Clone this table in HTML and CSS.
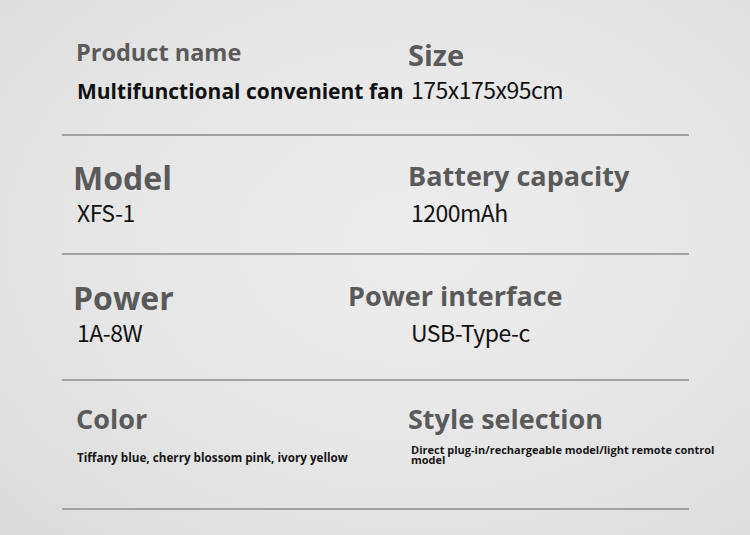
FILE: index.html
```html
<!DOCTYPE html>
<html lang="en">
<head>
<meta charset="utf-8">
<title>Product specs</title>
<link rel="stylesheet" href="styles.css">
</head>
<body>
<main class="sheet">
  <section class="row row-1">
    <div class="cell cell-left">
      <h2 class="label label-sm">Product name</h2>
      <p class="value value-bold">Multifunctional convenient fan</p>
    </div>
    <div class="cell cell-right">
      <h2 class="label label-size">Size</h2>
      <p class="value">175x175x95cm</p>
    </div>
  </section>
  <section class="row row-2">
    <div class="cell cell-left">
      <h2 class="label label-lg shift-l">Model</h2>
      <p class="value">XFS-1</p>
    </div>
    <div class="cell cell-right">
      <h2 class="label label-md">Battery capacity</h2>
      <p class="value">1200mAh</p>
    </div>
  </section>
  <section class="row row-3">
    <div class="cell cell-left">
      <h2 class="label label-lg shift-l">Power</h2>
      <p class="value">1A-8W</p>
    </div>
    <div class="cell cell-right">
      <h2 class="label label-md shift-far">Power interface</h2>
      <p class="value">USB-Type-c</p>
    </div>
  </section>
  <section class="row row-4">
    <div class="cell cell-left">
      <h2 class="label label-md">Color</h2>
      <p class="note">Tiffany blue, cherry blossom pink, ivory yellow</p>
    </div>
    <div class="cell cell-right">
      <h2 class="label label-md">Style selection</h2>
      <p class="note note-sm">Direct plug-in/rechargeable model/light remote control model</p>
    </div>
  </section>
</main>
</body>
</html>
```

FILE: styles.css
```css
html, body {
  margin: 0;
  padding: 0;
}
body {
  width: 750px;
  height: 535px;
  overflow: hidden;
  background: radial-gradient(ellipse at 55% 45%, #ededed 0%, #e6e6e6 55%, #dbdbdb 100%);
  font-family: "Open Sans", "Noto Sans", sans-serif;
}
.sheet {
  margin-left: 62px;
  width: 627px;
}
.row {
  display: grid;
  grid-template-columns: 346px 1fr;
  border-bottom: 2px solid #a2a2a2;
  box-sizing: border-box;
}
.row-1 { height: 136px; padding-top: 41px; }
.row-2 { height: 119px; padding-top: 26px; }
.row-3 { height: 126px; padding-top: 27px; }
.row-4 { height: 129px; padding-top: 24px; }
.cell {
  display: flex;
  flex-direction: column;
}
.cell-left { padding-left: 14px; }
.cell-right { padding-left: 0; }
.label {
  margin: 0;
  color: #5a5a5a;
  font-weight: 700;
  line-height: 1;
  white-space: nowrap;
}
.row-1 .label { height: 37px; }
.row-2 .label,
.row-3 .label { height: 38.5px; }
.row-4 .label { height: 46.5px; }
.label-sm { font-size: 23.5px; }
.label-size { font-size: 29px; margin-top: -1px; margin-bottom: 1px; }
.label-md { font-size: 27px; }
.label-lg { font-size: 32px; }
.shift-l { margin-left: -3px; }
.shift-far { margin-left: -60px; }
.value {
  margin: 0 0 0 1px;
  color: #111;
  font-family: "Noto Sans CJK SC", "Noto Sans", sans-serif;
  font-size: 23px;
  letter-spacing: -0.5px;
  line-height: 1;
  white-space: nowrap;
}
.cell-right .value { margin-left: 3px; }
.value-bold {
  margin-top: 3px;
  font-family: "Open Sans", "Noto Sans", sans-serif;
  font-weight: 700;
  font-size: 21px;
  letter-spacing: 0;
}
.note {
  margin: 0 0 0 1px;
  color: #151515;
  font-weight: 700;
  font-size: 11.7px;
  line-height: 1;
  white-space: nowrap;
}
.note-sm {
  margin: -7px 0 0 3px;
  font-size: 11px;
  line-height: 10px;
  width: 310px;
  white-space: normal;
}
```
